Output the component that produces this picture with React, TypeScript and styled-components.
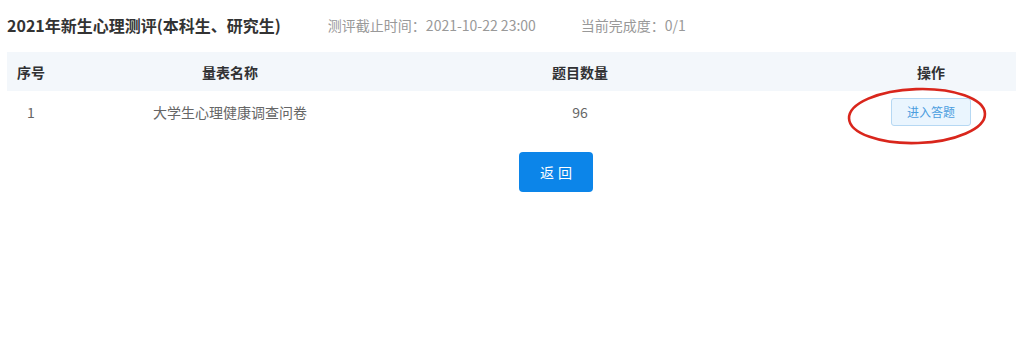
import React from 'react';
import styled, { createGlobalStyle } from 'styled-components';

const GlobalStyle = createGlobalStyle`
  html, body {
    margin: 0;
    padding: 0;
    background: #fff;
    overflow: hidden;
  }
  body {
    font-family: "Noto Sans CJK SC", "Noto Sans", sans-serif;
    color: #333;
  }
`;

const Page = styled.div`
  width: 1016px;
  height: 360px;
  padding: 0 0 0 7px;
  box-sizing: border-box;
  overflow: hidden;
`;

const TitleBar = styled.div`
  display: flex;
  align-items: center;
  height: 50px;
  padding-bottom: 2px;
`;

const Title = styled.div`
  font-size: 16px;
  font-weight: 700;
  color: #333;
  margin-right: 47px;
`;

const Meta = styled.div<{ gap?: number }>`
  font-size: 14px;
  color: #999;
  margin-right: ${({ gap }) => gap ?? 0}px;
`;

const Table = styled.div`
  width: 1075px;
`;

const Row = styled.div<{ head?: boolean }>`
  display: grid;
  grid-template-columns: 73px 300px 400px 1fr;
  align-items: center;
  height: ${({ head }) => (head ? 39 : 41)}px;
  background: ${({ head }) => (head ? '#f3f7fb' : '#fff')};
  font-size: 14px;
  font-weight: ${({ head }) => (head ? 700 : 400)};
  color: ${({ head }) => (head ? '#303133' : '#666')};
`;

const Cell = styled.div<{ align?: 'left' | 'center'; pad?: number }>`
  text-align: ${({ align }) => align ?? 'center'};
  padding-left: ${({ pad }) => pad ?? 0}px;
  position: relative;
`;

const ActionButton = styled.button`
  width: 80px;
  height: 28px;
  border: 1px solid #b6d8f3;
  border-radius: 3px;
  background: #eaf5fe;
  color: #4a9ddf;
  font-family: inherit;
  font-size: 12px;
  padding: 0;
  cursor: pointer;
`;

const Annotation = styled.svg`
  position: absolute;
  left: 50%;
  top: 50%;
  width: 140px;
  height: 58px;
  transform: translate(-60%, -43%);
  pointer-events: none;
  overflow: visible;
`;

const Footer = styled.div`
  width: 1075px;
  box-sizing: border-box;
  display: flex;
  justify-content: center;
  padding: 20px 0 0 23px;
`;

const BackButton = styled.button`
  width: 74px;
  height: 40px;
  border: none;
  border-radius: 4px;
  background: #0c85e9;
  color: #fff;
  font-family: inherit;
  font-size: 14px;
  letter-spacing: 4px;
  text-indent: 4px;
  cursor: pointer;
`;

const rows = [{ no: 1, name: '大学生心理健康调查问卷', count: 96 }];

export default function App() {
  return (
    <Page>
      <GlobalStyle />
      <TitleBar>
        <Title>2021年新生心理测评(本科生、研究生)</Title>
        <Meta gap={45}>测评截止时间：2021-10-22 23:00</Meta>
        <Meta>当前完成度：0/1</Meta>
      </TitleBar>
      <Table>
        <Row head>
          <Cell align="left" pad={10}>序号</Cell>
          <Cell>量表名称</Cell>
          <Cell>题目数量</Cell>
          <Cell>操作</Cell>
        </Row>
        {rows.map((r) => (
          <Row key={r.no}>
            <Cell align="left" pad={20}>{r.no}</Cell>
            <Cell>{r.name}</Cell>
            <Cell>{r.count}</Cell>
            <Cell>
              <ActionButton>进入答题</ActionButton>
              <Annotation viewBox="0 0 140 58">
                <ellipse cx="70" cy="29" rx="68" ry="27" fill="none" stroke="#d9261c" strokeWidth="2.6" transform="rotate(-2 70 29)" />
              </Annotation>
            </Cell>
          </Row>
        ))}
      </Table>
      <Footer>
        <BackButton>返回</BackButton>
      </Footer>
    </Page>
  );
}
